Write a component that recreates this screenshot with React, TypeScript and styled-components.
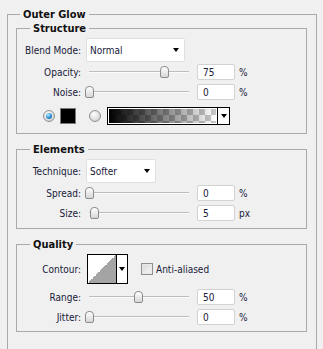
import React from "react";
import styled, { createGlobalStyle } from "styled-components";

const FONT = `"DejaVu Sans Condensed", "DejaVu Sans", "Liberation Sans", sans-serif`;

const GlobalStyle = createGlobalStyle`
  html, body {
    margin: 0;
    padding: 0;
    overflow: hidden;
    background: #f0f0f0;
  }
  body {
    font-family: ${FONT};
    font-size: 10px;
    color: #18203a;
  }
`;

const Page = styled.div`
  width: 323px;
  height: 349px;
  box-sizing: border-box;
  overflow: hidden;
  padding: 14px 0 0 7px;
`;

const Group = styled.section<{ $mt?: number; $pb?: number }>`
  border: 1px solid #a9a9a9;
  margin-top: ${(p) => p.$mt ?? 0}px;
  padding-bottom: ${(p) => p.$pb ?? 0}px;
`;

const OuterGroup = styled(Group)`
  width: 310px;
  box-sizing: border-box;
  padding: 0 9px 40px 8px;
`;

const Title = styled.div<{ $ml: number }>`
  width: fit-content;
  margin: -7px 0 0 ${(p) => p.$ml}px;
  padding: 0 3px;
  background: #f0f0f0;
  font-weight: bold;
  font-size: 11px;
  line-height: 13px;
  color: #111;
`;

const Row = styled.div<{ $h: number; $mt: number; $pl?: number }>`
  display: flex;
  align-items: center;
  height: ${(p) => p.$h}px;
  margin-top: ${(p) => p.$mt}px;
  padding-left: ${(p) => p.$pl ?? 0}px;
`;

const Label = styled.div`
  flex: none;
  width: 64px;
  margin-right: 5px;
  text-align: right;
  white-space: nowrap;
`;

const Select = styled.div<{ $w: number }>`
  flex: none;
  width: ${(p) => p.$w}px;
  height: 24px;
  box-sizing: border-box;
  display: flex;
  align-items: center;
  justify-content: space-between;
  padding: 0 5px 0 3px;
  background: #fff;
  border: 1px solid #e0e0e0;
  border-radius: 2px;
`;

const Arrow = styled.span`
  width: 0;
  height: 0;
  border-left: 3px solid transparent;
  border-right: 3px solid transparent;
  border-top: 4px solid #000;
`;

const Slider = styled.div`
  position: relative;
  flex: none;
  width: 107px;
  height: 16px;
`;

const Track = styled.div`
  position: absolute;
  left: 3px;
  right: 4px;
  top: 7px;
  height: 1px;
  background: #bdbdbd;
  border-bottom: 1px solid #fbfbfb;
`;

const Thumb = styled.div`
  position: absolute;
  top: 2px;
  width: 9px;
  height: 12px;
  box-sizing: border-box;
  border: 1px solid #8c8c8c;
  border-radius: 4px 4px 2px 2px;
  background: linear-gradient(#ffffff, #d6d6d6);
`;

const NumBox = styled.div`
  flex: none;
  width: 38px;
  height: 16px;
  box-sizing: border-box;
  margin-left: 4px;
  padding-left: 5px;
  display: flex;
  align-items: center;
  background: #fff;
  border: 1px solid #d2d2d2;
  border-radius: 2px;
`;

const Unit = styled.span`
  margin-left: 4px;
`;

const Radio = styled.span<{ $on?: boolean; $ml?: number }>`
  flex: none;
  position: relative;
  width: 12px;
  height: 12px;
  box-sizing: border-box;
  margin-left: ${(p) => p.$ml ?? 0}px;
  border-radius: 50%;
  border: 1px solid #8f9090;
  background: radial-gradient(circle at 40% 35%, #ffffff, #d4d4d4 75%);
  &::after {
    content: "";
    display: ${(p) => (p.$on ? "block" : "none")};
    position: absolute;
    left: 2px;
    top: 2px;
    width: 6px;
    height: 6px;
    border-radius: 50%;
    background: radial-gradient(circle at 35% 30%, #b8ecff, #2a8fd6 55%, #0d4f8c);
  }
`;

const Swatch = styled.span<{ $ml: number }>`
  flex: none;
  width: 16px;
  height: 16px;
  box-sizing: border-box;
  margin-left: ${(p) => p.$ml}px;
  border: 1px solid #7a7a7a;
  background: #000;
`;

const GradientBox = styled.div`
  flex: none;
  display: flex;
  width: 123px;
  height: 18px;
  box-sizing: border-box;
  margin-left: 6px;
  border: 1px solid #000;
`;

const GradientFill = styled.div`
  flex: 1;
  border: 1px solid #fff;
  background:
    linear-gradient(to right, #000 0%, rgba(0, 0, 0, 0) 100%),
    repeating-conic-gradient(#c8c8c8 0% 25%, #ffffff 0% 50%) 0 0 / 12px 12px;
`;

const DropPart = styled.div<{ $w: number }>`
  flex: none;
  width: ${(p) => p.$w}px;
  display: flex;
  align-items: center;
  justify-content: center;
  background: #fff;
  border-left: 1px solid #000;
`;

const ContourBox = styled.div`
  flex: none;
  display: flex;
  width: 41px;
  height: 30px;
  box-sizing: border-box;
  margin-left: 1px;
  border: 1px solid #000;
`;

const ContourCurve = styled.div`
  flex: 1;
  background: linear-gradient(to top left, #a4a4a4 50%, #ffffff 50%);
`;

const CheckBox = styled.span`
  flex: none;
  width: 12px;
  height: 12px;
  box-sizing: border-box;
  margin-left: 13px;
  border: 1px solid #8f8f8f;
  background: linear-gradient(135deg, #d8d8d8, #f6f6f6);
  box-shadow: inset 0 0 0 1px #e8e8e8;
`;

const CheckLabel = styled.span`
  margin-left: 3px;
`;

type SliderRowProps = {
  label: string;
  value: number;
  pos: number;
  unit: string;
  mt: number;
};

const SliderRow: React.FC<SliderRowProps> = ({ label, value, pos, unit, mt }) => (
  <Row $h={16} $mt={mt}>
    <Label>{label}</Label>
    <Slider>
      <Track />
      <Thumb style={{ left: 3 + pos - 4 }} />
    </Slider>
    <NumBox>{value}</NumBox>
    <Unit>{unit}</Unit>
  </Row>
);

const App: React.FC = () => {
  return (
    <>
      <GlobalStyle />
      <Page>
        <OuterGroup>
          <Title $ml={4}>Outer Glow</Title>

          <Group $mt={7} $pb={8}>
            <Title $ml={13}>Structure</Title>
            <Row $h={24} $mt={3}>
              <Label>Blend Mode:</Label>
              <Select $w={99}>
                Normal
                <Arrow />
              </Select>
            </Row>
            <SliderRow label="Opacity:" value={75} pos={75} unit="%" mt={2} />
            <SliderRow label="Noise:" value={0} pos={0} unit="%" mt={4} />
            <Row $h={18} $mt={7} $pl={26}>
              <Radio $on />
              <Swatch $ml={5} />
              <Radio $ml={13} />
              <GradientBox>
                <GradientFill />
                <DropPart $w={11}>
                  <Arrow />
                </DropPart>
              </GradientBox>
            </Row>
          </Group>

          <Group $mt={15} $pb={7}>
            <Title $ml={13}>Elements</Title>
            <Row $h={24} $mt={3}>
              <Label>Technique:</Label>
              <Select $w={70}>
                Softer
                <Arrow />
              </Select>
            </Row>
            <SliderRow label="Spread:" value={0} pos={0} unit="%" mt={2} />
            <SliderRow label="Size:" value={5} pos={5} unit="px" mt={4} />
          </Group>

          <Group $mt={15} $pb={6}>
            <Title $ml={13}>Quality</Title>
            <Row $h={30} $mt={3}>
              <Label>Contour:</Label>
              <ContourBox>
                <ContourCurve />
                <DropPart $w={10}>
                  <Arrow />
                </DropPart>
              </ContourBox>
              <CheckBox />
              <CheckLabel>Anti-aliased</CheckLabel>
            </Row>
            <SliderRow label="Range:" value={50} pos={49} unit="%" mt={5} />
            <SliderRow label="Jitter:" value={0} pos={0} unit="%" mt={4} />
          </Group>
        </OuterGroup>
      </Page>
    </>
  );
};

export default App;
